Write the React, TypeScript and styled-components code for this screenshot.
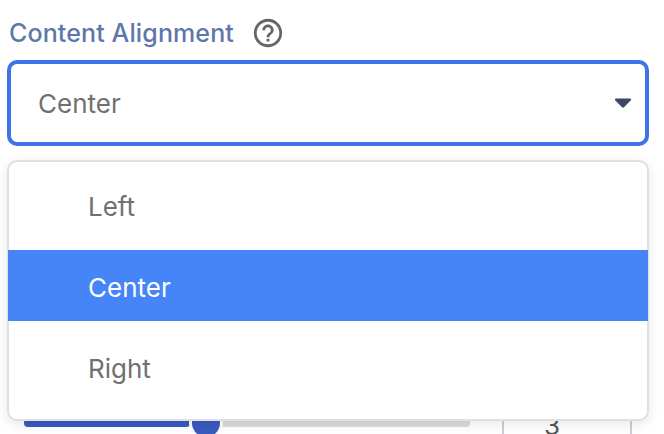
import { createGlobalStyle } from "styled-components";
import styled from "styled-components";
import { MdHelpOutline } from "react-icons/md";

const GlobalStyle = createGlobalStyle`
  html, body {
    margin: 0;
    height: 100%;
    background: #fff;
    overflow: hidden;
  }
  * { box-sizing: border-box; }
`;

const Page = styled.div`
  position: relative;
  width: 664px;
  height: 434px;
  padding: 16px 15px 0 7px;
  overflow: hidden;
  font-family: Inter, "Liberation Sans", sans-serif;
`;

const LabelRow = styled.div`
  display: flex;
  align-items: center;
  gap: 17px;
  height: 34px;
  padding-left: 2px;
  margin-bottom: 10px;
`;

const Label = styled.label`
  font-size: 25px;
  font-weight: 500;
  letter-spacing: 0.12px;
  color: #5e77ab;
`;

const HelpIcon = styled(MdHelpOutline)`
  font-size: 34px;
  color: #666;
`;

const Select = styled.div`
  display: flex;
  align-items: center;
  justify-content: space-between;
  height: 86px;
  padding: 0 13px 0 27px;
  border: 4px solid #3f72e5;
  border-radius: 10px;
  background: #fff;
  font-size: 26px;
  color: #707070;
`;

const Caret = styled.svg`
  width: 18px;
  height: 12px;
  fill: #3d4663;
`;

const Menu = styled.ul`
  position: absolute;
  top: 160px;
  left: 7px;
  width: 642px;
  height: 261px;
  margin: 0;
  padding: 7px 0 0;
  display: flex;
  flex-direction: column;
  gap: 10px;
  list-style: none;
  background: #fff;
  border: 2px solid #e0e0e0;
  border-radius: 10px;
  box-shadow: 0 3px 12px rgba(0, 0, 0, 0.1);
  z-index: 2;
`;

const Option = styled.li<{ $active?: boolean }>`
  display: flex;
  align-items: center;
  height: 71px;
  padding: 3px 0 0 80px;
  font-size: 26px;
  margin: 0 -1px;
  color: ${(p) => (p.$active ? "#fff" : "#707070")};
  background: ${(p) => (p.$active ? "#4585f8" : "transparent")};
`;

const SliderRow = styled.div`
  display: flex;
  align-items: center;
  margin-top: 257px;
  padding-left: 17px;
  height: 40px;
`;

const Track = styled.div`
  position: relative;
  width: 446px;
  height: 8px;
  border-radius: 4px;
  background: #dcdcdc;
`;

const TrackFill = styled.div`
  height: 100%;
  width: 166px;
  border-radius: 4px;
  background: #3a5bbf;
`;

const Thumb = styled.div`
  position: absolute;
  top: -10px;
  left: 168px;
  width: 28px;
  height: 28px;
  border-radius: 50%;
  background: #3a5bbf;
  box-shadow: 0 0 0 3px #fff;
`;

const NumberBox = styled.div`
  width: 130px;
  height: 60px;
  margin-left: 32px;
  padding: 4px 30px 0 0;
  border-left: 2px solid #c8cde0;
  border-right: 2px solid #c8cde0;
  display: flex;
  justify-content: center;
  align-items: center;
  font-size: 26px;
  color: #555;
`;

const options = ["Left", "Center", "Right"];

export default function App() {
  return (
    <Page>
      <GlobalStyle />
      <LabelRow>
        <Label>Content Alignment</Label>
        <HelpIcon />
      </LabelRow>
      <Select>
        Center
        <Caret viewBox="0 0 18 12">
          <path d="M2 1.500h14c1 0 1.400 1 .8 1.700L10 10.200c-.6.600-1.400.600-2 0L1.200 3.200C.6 2.500 1 1.500 2 1.500z" />
        </Caret>
      </Select>
      <Menu>
        {options.map((o) => (
          <Option key={o} $active={o === "Center"}>
            {o}
          </Option>
        ))}
      </Menu>
      <SliderRow>
        <Track>
          <TrackFill />
          <Thumb />
        </Track>
        <NumberBox>3</NumberBox>
      </SliderRow>
    </Page>
  );
}
